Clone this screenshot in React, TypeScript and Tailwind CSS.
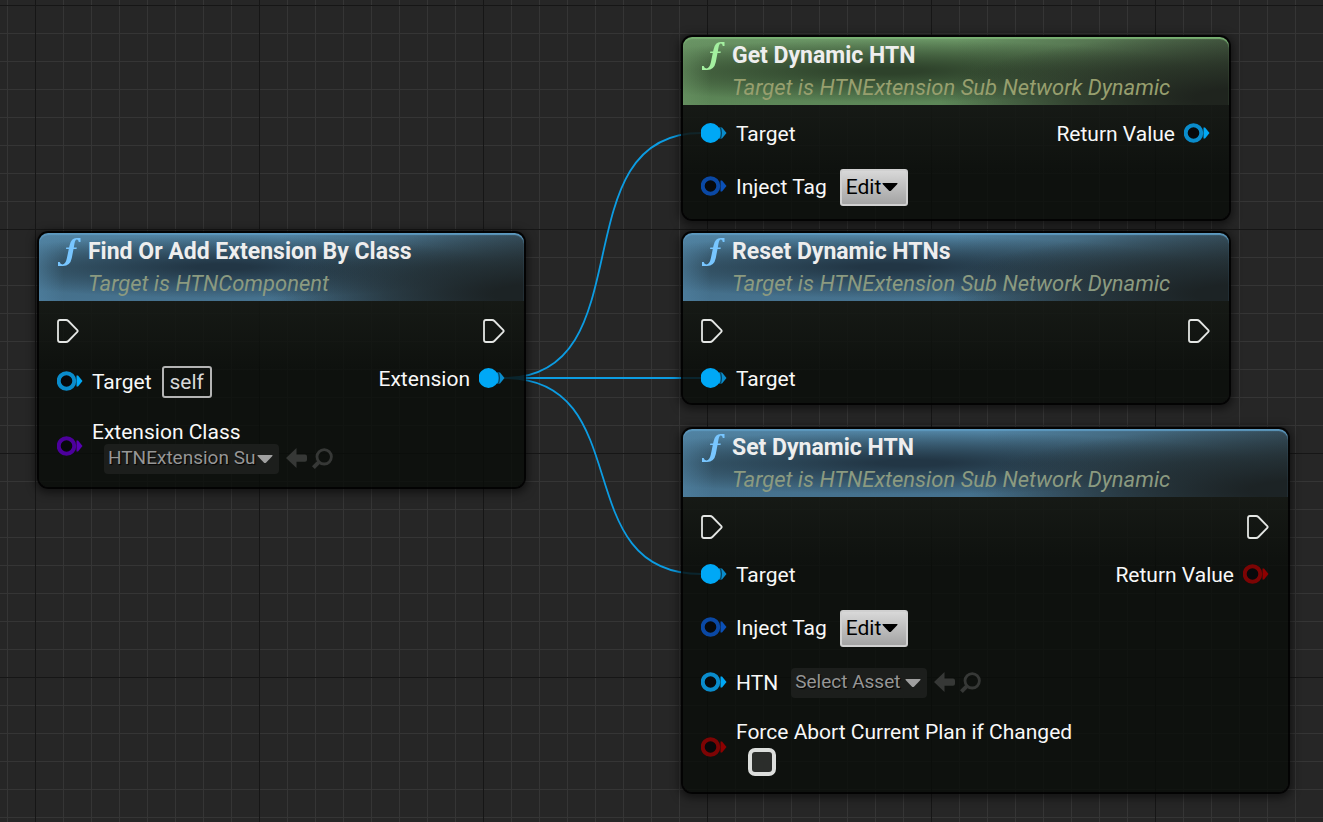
import React from "react";

type PinColor = "cyan" | "blue" | "purple" | "red";

const PIN: Record<PinColor, { ring: string; fill: string }> = {
  cyan: { ring: "#0a8ccc", fill: "#00a8f6" },
  blue: { ring: "#0a48a4", fill: "#0a50b8" },
  purple: { ring: "#4c009c", fill: "#5800b4" },
  red: { ring: "#7c0404", fill: "#8e0000" },
};

function Pin({ color, filled = false }: { color: PinColor; filled?: boolean }) {
  const c = PIN[color];
  return (
    <svg className="mb-[2px] h-5 w-[26px] shrink-0" viewBox="0 0 26 20" aria-hidden="true">
      {filled ? (
        <>
          <path d="M17 4.5 H21 L25.5 10 L21 15.5 H17 Z" fill={c.ring} />
          <circle cx="9.5" cy="10" r="10" fill={c.fill} />
          <path d="M19.4 4.5 Q21.4 10 19.4 15.5" fill="none" stroke="#06405c" strokeWidth="1.2" />
        </>
      ) : (
        <>
          <path d="M19.5 4.5 L21 4.5 L25.5 10 L21 15.5 L19.5 15.5 Z" fill={c.fill} />
          <circle cx="9.5" cy="10" r="7.8" fill="#07090b" stroke={c.ring} strokeWidth="4" />
        </>
      )}
    </svg>
  );
}

function Exec() {
  return (
    <svg className="h-6 w-[22px] shrink-0" viewBox="0 0 22 24" aria-hidden="true">
      <path
        d="M3 1 H9 Q10.4 1 11.4 2 L20.3 11 Q21.1 12 20.3 13 L11.4 22 Q10.4 23 9 23 H3 Q1 23 1 21 V3 Q1 1 3 1 Z"
        fill="none"
        stroke="#e4e6e4"
        strokeWidth="1.8"
      />
    </svg>
  );
}

function FunctionGlyph({ color }: { color: string }) {
  return (
    <svg className="h-7 w-6 shrink-0" viewBox="0 0 24 28" aria-hidden="true">
      <path
        d="M23.5 0 V4 H21.8 Q21.4 1.6 19.8 1.6 Q18.2 1.6 17.5 5.6 L16.8 9.4 H19.8 L19.5 11 H16.5 L14.8 20 Q13.2 28 6 28 H1 V24 H2.7 Q3.2 26.4 5.4 26.4 Q8.6 26.4 9.8 20.6 L11.8 11 H9 L9.3 9.4 H12.1 L12.6 7.2 Q14.2 0 19.6 0 Z"
        fill={color}
      />
    </svg>
  );
}

function Node({
  place,
  pad,
  tone,
  title,
  subtitle,
  left,
  right,
}: {
  place: string;
  pad: string;
  tone: "blue" | "green";
  title: string;
  subtitle: string;
  left: React.ReactNode;
  right: React.ReactNode;
}) {
  const blue = tone === "blue";
  return (
    <section
      className={`absolute rounded-[11px] border-2 border-black/90 bg-[#0a0d0a]/83 bg-clip-padding shadow-[0_2px_8px_2px_rgba(0,0,0,0.5)] ${place}`}
    >
      <header
        className={`flex h-[68px] gap-[7px] rounded-t-[9px] pt-[5px] pl-[18px] ${
          blue
            ? "bg-[linear-gradient(to_right,rgba(82,133,166,0.5),transparent_5%),radial-gradient(ellipse_55%_95%_at_102%_90%,rgba(28,35,37,1)_15%,rgba(28,35,37,0.6)_55%,transparent),linear-gradient(to_right,transparent_50%,rgba(40,50,54,0.6)_100%),radial-gradient(ellipse_58%_46%_at_38%_50%,rgba(34,54,69,1)_10%,rgba(34,54,69,0.5)_55%,transparent),linear-gradient(to_bottom,#5284a4,#41697f_50%,#46728f)] shadow-[inset_0_2px_1px_#5c98be]"
            : "bg-[linear-gradient(to_right,rgba(107,150,102,0.5),transparent_5%),radial-gradient(ellipse_55%_95%_at_102%_90%,rgba(31,36,30,1)_15%,rgba(31,36,30,0.6)_55%,transparent),linear-gradient(to_right,transparent_50%,rgba(46,54,44,0.6)_100%),radial-gradient(ellipse_58%_46%_at_38%_50%,rgba(46,66,43,1)_10%,rgba(46,66,43,0.5)_55%,transparent),linear-gradient(to_bottom,#6b9666,#53784d_50%,#5d8758)] shadow-[inset_0_2px_1px_#78b072]"
        }`}
      >
        <FunctionGlyph color={blue ? "#78c6ff" : "#a4f0a0"} />
        <div>
          <h2 className="text-[23px] leading-7 font-bold whitespace-nowrap text-[#eeeeee]">{title}</h2>
          <p
            className={`mt-1 text-[22px] leading-7 whitespace-nowrap italic ${
              blue ? "text-[#8b9a80]" : "text-[#979f6e]"
            }`}
          >
            {subtitle}
          </p>
        </div>
      </header>
      <div
        className={`flex justify-between rounded-b-[9px] bg-[linear-gradient(to_bottom,rgba(30,34,29,0.5),transparent_70px)] pr-[19px] pl-[18px] ${pad}`}
      >
        <div>{left}</div>
        <div className="flex flex-col items-end">{right}</div>
      </div>
    </section>
  );
}

function Row({ size = "h-12", children }: { size?: string; children: React.ReactNode }) {
  return <div className={`flex items-center gap-[9px] whitespace-nowrap ${size}`}>{children}</div>;
}

function Caret({ className }: { className: string }) {
  return (
    <svg className={`h-2 w-4 ${className}`} viewBox="0 0 16 8" aria-hidden="true">
      <path d="M1 0 H15 Q16 0 15.4 1 L9.2 7.4 Q8 8.4 6.8 7.4 L0.6 1 Q0 0 1 0 Z" fill="currentColor" />
    </svg>
  );
}

function EditButton() {
  return (
    <button
      type="button"
      className="ml-1 flex h-[37px] w-[68px] items-center rounded-[3px] border-2 border-[#d0d0d0] bg-linear-to-b from-[#d8d8d8] to-[#a4a4a4] pl-1 text-[21px] text-black"
    >
      Edit
      <Caret className="ml-px" />
    </button>
  );
}

function AssetPicker({ label, value, width }: { label: string; value: string; width: string }) {
  return (
    <div className="flex items-center">
      <div className={`relative h-[30px] ${width}`}>
        <select
          aria-label={label}
          className="h-full w-full appearance-none rounded-[4px] bg-[#1c1e1c] pb-[2px] pl-1 text-[19px] text-[#969696] [text-shadow:1px_1px_1px_#000]"
        >
          <option>{value}</option>
        </select>
        <Caret className="pointer-events-none absolute top-[11px] right-[6px] text-[#a0a0a0]" />
      </div>
      <button type="button" aria-label="Use selected" className="mb-[2px] ml-[7px] text-[#363836]">
        <svg className="h-5 w-[21px]" viewBox="0 0 21 20" aria-hidden="true">
          <path d="M0 10 L10.5 0 V6.4 H19 Q21 6.4 21 8.4 V11.8 Q21 13.8 19 13.8 H10.5 V20 Z" fill="currentColor" />
        </svg>
      </button>
      <button type="button" aria-label="Browse" className="mb-[2px] ml-[5px] text-[#363836]">
        <svg className="h-[21px] w-[21px]" viewBox="0 0 21 21" aria-hidden="true">
          <circle cx="12.2" cy="8.8" r="7.2" fill="none" stroke="currentColor" strokeWidth="2.8" />
          <path d="M6.8 14.2 L1.4 19.6" stroke="currentColor" strokeWidth="4" />
        </svg>
      </button>
    </div>
  );
}

export default function App() {
  return (
    <main className="relative min-h-screen w-full overflow-hidden bg-[#262626] font-['Roboto',sans-serif] text-[21px] leading-6 text-[#f8f8f8]">
      <div className="absolute inset-0 bg-[linear-gradient(to_right,#353535_1px,transparent_1px),linear-gradient(to_bottom,#353535_1px,transparent_1px)] bg-[size:28px_28px] bg-[position:7px_5px]" />
      <div className="absolute inset-0 bg-[linear-gradient(to_right,#161616_1px,transparent_1px),linear-gradient(to_bottom,#161616_1px,transparent_1px)] bg-[size:224px_224px] bg-[position:35px_5px]" />

      <svg
        className="pointer-events-none absolute top-0 left-0 h-[822px] w-[1323px]"
        viewBox="0 0 1323 822"
        aria-hidden="true"
      >
        <g fill="none" stroke="#0c9ce2" strokeWidth="1.8">
          <path d="M504 378 C647 378 558 133 701 133" />
          <path d="M504 378 H701" />
          <path d="M504 378 C640 378 565 574 701 574" />
        </g>
      </svg>

      <Node
        place="left-[37px] top-[231px] w-[489px]"
        pad="pt-[6px] pb-[2px]"
        tone="blue"
        title="Find Or Add Extension By Class"
        subtitle="Target is HTNComponent"
        left={
          <>
            <Row><Exec /></Row>
            <Row size="h-[54px]">
              <Pin color="cyan" />
              <span>Target</span>
              <span className="ml-px rounded-[3px] border-2 border-[#b4b4b4] px-[6px] py-[2px] text-[#d8d8d8]">self</span>
            </Row>
            <Row size="h-[76px]">
              <Pin color="purple" />
              <div>
                <div>Extension Class</div>
                <div className="pl-3">
                  <AssetPicker label="Extension Class" value="HTNExtension Su" width="w-[175px]" />
                </div>
              </div>
            </Row>
          </>
        }
        right={
          <>
            <Row><Exec /></Row>
            <Row>
              <span>Extension</span>
              <Pin color="cyan" filled />
            </Row>
          </>
        }
      />

      <Node
        place="left-[681px] top-[35px] w-[550px]"
        pad="pt-[5px] pb-[3px]"
        tone="green"
        title="Get Dynamic HTN"
        subtitle="Target is HTNExtension Sub Network Dynamic"
        left={
          <>
            <Row>
              <Pin color="cyan" filled />
              <span>Target</span>
            </Row>
            <Row size="h-[58px]">
              <Pin color="blue" />
              <span>Inject Tag</span>
              <EditButton />
            </Row>
          </>
        }
        right={
          <Row>
            <span>Return Value</span>
            <Pin color="cyan" />
          </Row>
        }
      />

      <Node
        place="left-[681px] top-[231px] w-[550px]"
        pad="pt-[6px]"
        tone="blue"
        title="Reset Dynamic HTNs"
        subtitle="Target is HTNExtension Sub Network Dynamic"
        left={
          <>
            <Row><Exec /></Row>
            <Row>
              <Pin color="cyan" filled />
              <span>Target</span>
            </Row>
          </>
        }
        right={<Row><Exec /></Row>}
      />

      <Node
        place="left-[681px] top-[427px] w-[609px]"
        pad="pt-[6px] pb-[5px]"
        tone="blue"
        title="Set Dynamic HTN"
        subtitle="Target is HTNExtension Sub Network Dynamic"
        left={
          <>
            <Row><Exec /></Row>
            <Row>
              <Pin color="cyan" filled />
              <span>Target</span>
            </Row>
            <Row size="h-[58px]">
              <Pin color="blue" />
              <span>Inject Tag</span>
              <EditButton />
            </Row>
            <Row size="h-[52px]">
              <Pin color="cyan" />
              <span>HTN</span>
              <div className="ml-1">
                <AssetPicker label="HTN" value="Select Asset" width="w-[136px]" />
              </div>
            </Row>
            <Row size="h-[78px]">
              <Pin color="red" />
              <div>
                <label htmlFor="force-abort" className="block">Force Abort Current Plan if Changed</label>
                <input
                  id="force-abort"
                  type="checkbox"
                  className="mt-1 ml-3 block h-7 w-7 appearance-none rounded-[7px] border-4 border-[#dcdedc] bg-[#2b2d2b] checked:bg-[#9a9a9a]"
                />
              </div>
            </Row>
          </>
        }
        right={
          <>
            <Row><Exec /></Row>
            <Row>
              <span>Return Value</span>
              <Pin color="red" />
            </Row>
          </>
        }
      />
    </main>
  );
}
